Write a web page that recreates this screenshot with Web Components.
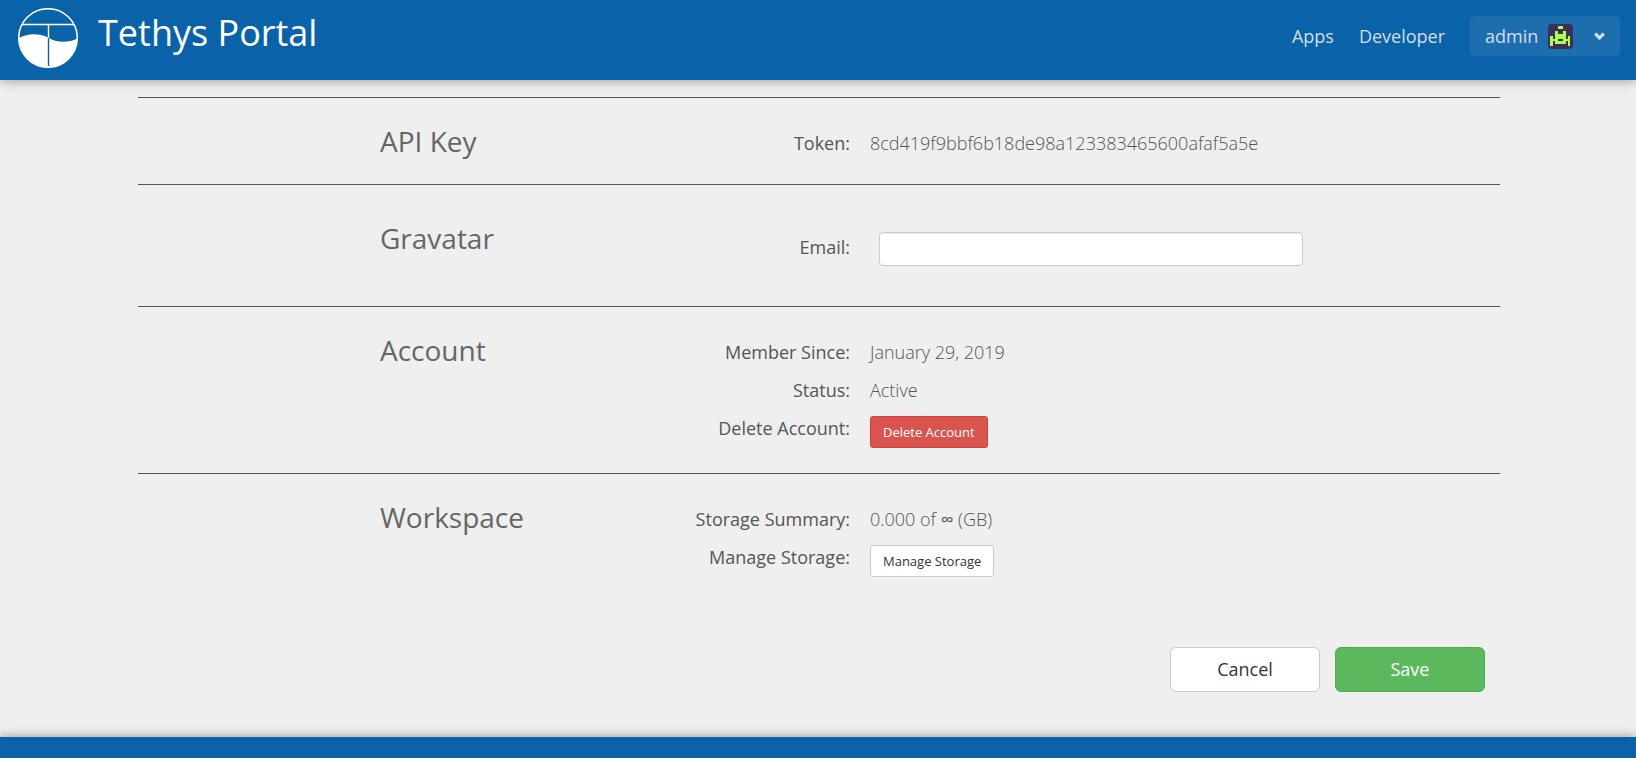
<!DOCTYPE html>
<html lang="en">
<head>
<meta charset="utf-8">
<title>Tethys Portal</title>
<style>
  html { height: 100%; }
  body {
    margin: 0;
    min-height: 100%;
    display: flex;
    flex-direction: column;
    background: #efefef;
    color: #555555;
    font: 18px/24px "Open Sans", sans-serif;
  }
</style>
</head>
<body>
<portal-header></portal-header>
<settings-page></settings-page>
<portal-footer></portal-footer>

<script>
const define = (name, html) => {
  const template = document.createElement('template');
  template.innerHTML = html;
  customElements.define(name, class extends HTMLElement {
    constructor() {
      super();
      this.attachShadow({ mode: 'open' }).append(template.content.cloneNode(true));
    }
  });
};

define('portal-logo', `
  <style>
    :host { display: block; width: 60px; height: 60px; }
    svg { display: block; }
  </style>
  <svg width="60" height="60" viewBox="0 0 60 60" aria-hidden="true">
    <circle cx="30" cy="30" r="29.3" fill="none" stroke="#fff" stroke-width="1.5"/>
    <path d="M4 16.5H56M30.5 16.5V31" fill="none" stroke="#fff" stroke-width="1.4"/>
    <path d="M.6 30C10 25 21 25 30 29.500C39 35 50 35 59.400 30.500A29.400 29.400 0 0 1 .6 30Z" fill="#fff"/>
    <path d="M30.500 30V58" stroke="#0a62a9" stroke-width="1.400"/>
  </svg>
`);

define('user-menu', `
  <style>
    :host { display: block; }
    button {
      display: flex; align-items: center; box-sizing: border-box;
      width: 150px; height: 40px; padding: 0 15px; border: 0; border-radius: 5px;
      background: rgba(255,255,255,.08); color: inherit; font: inherit;
    }
    .avatar { margin-left: 10px; }
    .chevron { margin-left: auto; overflow: visible; }
  </style>
  <button type="button" aria-haspopup="menu">
    <span>admin</span>
    <svg class="avatar" width="25" height="25" viewBox="0 0 25 25" aria-hidden="true">
      <rect width="25" height="25" rx="4" fill="#3d2f55"/>
      <g fill="#adff4b" shape-rendering="crispEdges">
        <path d="M10 2h5v3h-5z"/>
        <path fill-rule="evenodd" d="M7 7h3v3h5V7h3v8h2v-3h2v10h-2v-5h-2v3H7v-3H5v5H2V12h3v3h2zM10 15v2h5v-2z"/>
      </g>
    </svg>
    <svg class="chevron" width="11" height="8" viewBox="0 0 11 8" aria-hidden="true">
      <path d="M1.200 1.600L5.500 5.900L9.800 1.600" fill="none" stroke="currentColor" stroke-width="3.200"/>
    </svg>
  </button>
`);

define('portal-header', `
  <style>
    :host {
      display: flex; align-items: flex-start; box-sizing: border-box; height: 80px;
      padding: 8px 16px 0 18px; background: #0a62a9; color: #ffffff;
      box-shadow: 0 0 12px rgba(0,0,0,.4); position: relative;
    }
    .brand { display: flex; gap: 20px; color: inherit; text-decoration: none; font-size: 36px; line-height: 50px; }
    nav { display: flex; align-items: center; gap: 25px; margin: 8px 0 0 auto; color: #d4dfe9; }
    nav a { color: inherit; text-decoration: none; }
  </style>
  <a class="brand" href="#"><portal-logo></portal-logo><span>Tethys Portal</span></a>
  <nav>
    <a href="#">Apps</a>
    <a href="#">Developer</a>
    <user-menu></user-menu>
  </nav>
`);

define('settings-section', `
  <style>
    :host {
      display: grid; grid-template-columns: 20fr 27fr 65fr; align-items: start;
      padding: 26px 0 22px calc(100% / 6 + 15px); border-top: 1px solid #555555;
    }
    :host([roomy]) { padding-top: 36px; padding-bottom: 33px; }
    h2 { margin: 0; font-size: 28px; line-height: 34px; font-weight: 400; color: #666666; }
    .rows { grid-column: 2 / 4; display: grid; }
  </style>
  <h2><slot name="title"></slot></h2>
  <div class="rows"><slot></slot></div>
`);

define('settings-row', `
  <style>
    :host { display: grid; grid-template-columns: 27fr 65fr; line-height: 38px; }
    .label { text-align: right; white-space: nowrap; }
    .value { padding-left: 20px; font-weight: 300; display: flex; }
  </style>
  <div class="label"><slot name="label"></slot></div>
  <div class="value"><slot></slot></div>
`);

define('email-row', `
  <style>
    :host { display: grid; grid-template-columns: 27fr 65fr; line-height: 52px; align-items: start; }
    label { justify-self: end; }
    .field { padding: 11px 0 0 29px; line-height: 0; }
    input {
      box-sizing: border-box; width: 424px; max-width: 100%; height: 34px; padding: 6px 12px;
      border: 1px solid #cccccc; border-radius: 4px; background: #ffffff;
      box-shadow: inset 0 1px 1px rgba(0,0,0,.075); font: inherit;
    }
  </style>
  <label for="email">Email:</label>
  <div class="field"><input id="email" type="email"></div>
`);

define('portal-button', `
  <style>
    :host { display: block; }
    button {
      display: block; box-sizing: border-box; width: 150px; height: 45px; padding: 0 0 2px;
      border: 1px solid #cccccc; border-radius: 6px;
      background: #ffffff; color: #333333; font: 400 18px/24px "Open Sans", sans-serif;
    }
    :host([small]) { padding: 7px 0 3px; }
    :host([small]) button { width: auto; height: 32px; padding: 0 12px; border-radius: 3px; font-size: 13px; line-height: 20px; }
    :host([kind="danger"]) button { background: #d9534f; border-color: #d43f3a; color: #ffffff; }
    :host([kind="success"]) button { background: #5cb85c; border-color: #4cae4c; color: #ffffff; }
  </style>
  <button type="button"><slot></slot></button>
`);

define('settings-page', `
  <style>
    :host { display: block; flex: 1 0 auto; padding: 17px 136px 45px 138px; }
    .actions { display: flex; justify-content: flex-end; gap: 15px; padding: 45px 15px 0 0; }
    .unlimited { font-weight: 400; }
  </style>
  <main>
    <settings-section>
      <span slot="title">API Key</span>
      <settings-row><span slot="label">Token:</span><span>8cd419f9bbf6b18de98a123383465600afaf5a5e</span></settings-row>
    </settings-section>
    <settings-section roomy>
      <span slot="title">Gravatar</span>
      <email-row></email-row>
    </settings-section>
    <settings-section>
      <span slot="title">Account</span>
      <settings-row><span slot="label">Member Since:</span><span>January 29, 2019</span></settings-row>
      <settings-row><span slot="label">Status:</span><span>Active</span></settings-row>
      <settings-row><span slot="label">Delete Account:</span><portal-button small kind="danger">Delete Account</portal-button></settings-row>
    </settings-section>
    <settings-section>
      <span slot="title">Workspace</span>
      <settings-row><span slot="label">Storage Summary:</span><span>0.000 of <span class="unlimited">∞</span> (GB)</span></settings-row>
      <settings-row><span slot="label">Manage Storage:</span><portal-button small>Manage Storage</portal-button></settings-row>
    </settings-section>
    <div class="actions">
      <portal-button>Cancel</portal-button>
      <portal-button kind="success">Save</portal-button>
    </div>
  </main>
`);

define('portal-footer', `
  <style>
    :host { display: block; }
    footer { height: 21px; background: #0a62a9; box-shadow: 0 0 12px rgba(0,0,0,.4); }
  </style>
  <footer></footer>
`);
</script>
</body>
</html>
